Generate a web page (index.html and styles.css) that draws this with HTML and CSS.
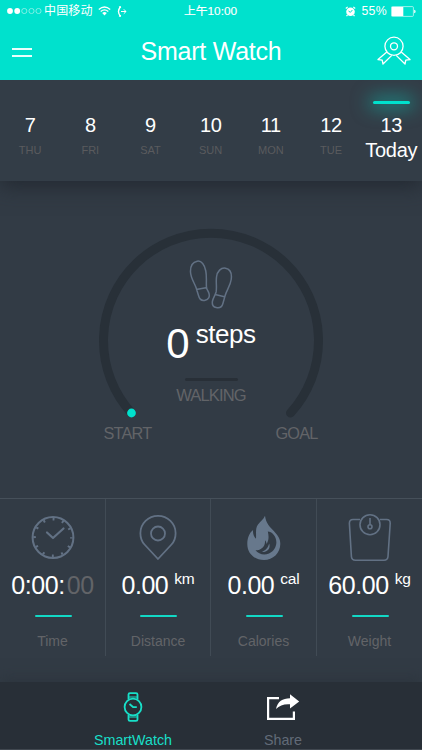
FILE: index.html
```html
<!DOCTYPE html>
<html lang="en">
<head>
<meta charset="utf-8">
<title>Smart Watch</title>
<link rel="stylesheet" href="styles.css">
</head>
<body>
<div class="app">
  <header class="header">
    <div class="status">
      <div class="status-left">
        <svg class="signal" width="36" height="8" viewBox="0 0 36 8"><g fill="#fff"><circle cx="3" cy="4" r="2.9"/><circle cx="10.2" cy="4" r="2.9"/></g><g fill="none" stroke="#fff" stroke-width=".6" opacity=".8"><circle cx="17.3" cy="4" r="2.6"/><circle cx="24.5" cy="4" r="2.6"/><circle cx="31.5" cy="4" r="2.6"/></g></svg>
        <span class="carrier">中国移动</span>
        <svg class="wifi" width="13" height="10" viewBox="0 0 13 10"><path d="M.8 3.4Q6.5-1.5 12.2 3.4M2.7 5.5Q6.5 2.3 10.3 5.5" fill="none" stroke="#fff" stroke-width="1.3"/><path d="M4.2 7Q6.5 5.2 8.8 7L6.5 9.5Z" fill="#fff"/></svg>
        <svg class="forward" width="10" height="11" viewBox="0 0 10 11"><path d="M3.6.8Q-.7 5.5 3.6 10.2" fill="none" stroke="#fff" stroke-width="1.3"/><path d="M2.2 1.5L3.8.6M2.2 9.5L3.8 10.4" stroke="#fff" stroke-width="1.8"/><path d="M4 5.5H9M6.8 3.3L9 5.5L6.8 7.7" fill="none" stroke="#fff"/></svg>
      </div>
      <div class="clock">上午10:00</div>
      <div class="status-right">
        <svg width="11" height="11" viewBox="0 0 11 11"><circle cx="5.5" cy="5.7" r="4.3" fill="#fff"/><path d="M.8 2.5L2.7.9M10.2 2.5L8.3.9M2.5 9L1.5 10.2M8.5 9L9.5 10.2" stroke="#fff" stroke-width="1.2"/><path d="M3.5 5L5.4 6.3L7.4 4" fill="none" stroke="#00e1cd"/></svg>
        <span class="percent">55%</span>
        <svg width="25" height="11" viewBox="0 0 25 11"><rect x=".4" y=".6" width="22" height="9.8" rx="1" fill="none" stroke="#fff" stroke-width=".6"/><path d="M.8 1H12.3V10H.8Z M23.2 3.8Q24.6 4 24.6 5.5T23.2 7.2Z" fill="#fff"/></svg>
      </div>
    </div>
    <div class="nav">
      <div class="menu"><i></i><i></i></div>
      <h1>Smart Watch</h1>
      <svg class="award" width="34" height="29" viewBox="0 0 34 29" fill="none" stroke="#fff" stroke-width="1.3" stroke-linejoin="round"><circle cx="17" cy="10.3" r="9.1"/><circle cx="17" cy="10.3" r="3.5"/><path d="M9.8 16L1 23.5L5.2 24.1L6 28L14.8 19.4M24.2 16L33 23.5L28.8 24.1L28 28L19.2 19.4"/></svg>
    </div>
  </header>

  <section class="days">
    <div class="day"><b>7</b><span>THU</span></div>
    <div class="day"><b>8</b><span>FRI</span></div>
    <div class="day"><b>9</b><span>SAT</span></div>
    <div class="day"><b>10</b><span>SUN</span></div>
    <div class="day"><b>11</b><span>MON</span></div>
    <div class="day"><b>12</b><span>TUE</span></div>
    <div class="day today"><b>13</b><span>Today</span></div>
  </section>

  <main class="main">
    <div class="gauge">
      <svg class="ring" width="226" height="200" viewBox="0 0 226 200"><path d="M33.5 185A107.5 107.5 0 1 1 192.5 185" fill="none" stroke="#283038" stroke-width="9" stroke-linecap="round"/><circle cx="33.5" cy="185" r="4.4" fill="#00e1cd"/></svg>
      <div class="reading">
        <svg class="feet" width="44" height="50" viewBox="0 0 44 50" fill="none" stroke="#627184" stroke-width="1.5" stroke-linejoin="round"><path d="M8.2 1.2C4 2 1.3 6 1.5 12C1.7 18 5.2 22.5 7.2 28L9.5 35.5C10.4 39 13 41 16.2 40.2C19.4 39.4 21 37 20 33.5C19.2 30.5 17.5 30 17.4 26.5C17.2 21 17.8 16 16.8 11C15.7 5 12.5.4 8.2 1.2ZM7.3 29.6L18.2 27.4M36.5 8.2C32 7.5 28.2 11 27.5 17C26.8 23 28 27 27.1 32C26.2 35.5 24.3 37.5 23.5 41C22.9 44 24 46.8 27.2 47.6C30.5 48.4 33 46.8 33.9 43.5L36 36C37.7 30 41.4 25.5 42.2 19.5C43 13.5 41 9 36.5 8.2ZM26.1 34.6L36.5 37"/></svg>
        <div class="count"><span class="zero">0</span><span class="steps">steps</span></div>
        <div class="rule"></div>
        <div class="mode">WALKING</div>
      </div>
    </div>
    <div class="ends"><span>START</span><span>GOAL</span></div>
  </main>

  <section class="stats">
    <div class="stat">
      <svg width="44" height="48" viewBox="0 0 44 48" fill="none" stroke="#627184"><circle cx="22" cy="24.5" r="20.4" stroke-width="2"/><circle cx="22" cy="24.5" r="18.4" stroke-width="2.6" stroke-dasharray="2 7.634" stroke-dashoffset="1"/><path d="M16 19.5L22 25L32.5 15.5" stroke-width="2.2" stroke-linecap="round" stroke-linejoin="round"/></svg>
      <div class="value time">0:00:<em>00</em></div><div class="dash"></div><div class="name">Time</div>
    </div>
    <div class="stat">
      <svg width="44" height="48" viewBox="0 0 44 48" fill="none" stroke="#627184" stroke-width="1.8" stroke-linejoin="round"><path d="M22 46L8.5 31.5C5.3 28 4.4 24 4.4 20.2A17.6 17.3 0 0 1 39.6 20.2C39.6 24 38.7 28 35.5 31.5Z"/><circle cx="22" cy="20.5" r="7"/></svg>
      <div class="value">0.00<sup>km</sup></div><div class="dash"></div><div class="name">Distance</div>
    </div>
    <div class="stat">
      <svg width="44" height="48" viewBox="0 0 44 48"><path fill="#67788c" fill-rule="evenodd" d="M23 2.7C23.8 10 28 14 31.8 18C36 22.5 38.3 25.5 38.3 31C38.3 40 31 47 22 47C12.5 47 5.3 40.5 5.3 31C5.3 25 7.2 20 11.1 17C10.7 20.5 11.7 23.5 14 25.8C14.3 19 13.2 15.5 16 11.5C18.5 8 21.5 6.5 23 2.7ZM25.8 18.5C27.2 24 26.6 28 24.5 31C24.3 29 24 28.3 23 27.2C23.6 33 19.8 37 13.5 37.3C16.5 41.2 22 42.6 27 40.5C35 37 36.6 27 31.2 21.2C29.7 19.5 28 18.8 25.8 18.5ZM27.2 30.5C29 36 24.5 39.5 19.8 38.8C23.8 37.5 25.8 35 27.2 30.5Z"/></svg>
      <div class="value">0.00<sup>cal</sup></div><div class="dash"></div><div class="name">Calories</div>
    </div>
    <div class="stat">
      <svg width="44" height="48" viewBox="0 0 44 48" fill="none" stroke="#627184" stroke-width="1.6"><path d="M12 6.5H5Q1.3 6.5 1.4 10.5L3.4 43.5Q3.7 47.2 7.4 47.2H36Q39.7 47.2 40 43.5L42.2 10.5Q42.4 6.5 38.7 6.5H31.8"/><circle cx="22" cy="11.7" r="10"/><circle cx="22" cy="13.8" r="2"/><path d="M22 5V12"/></svg>
      <div class="value">60.00<sup>kg</sup></div><div class="dash"></div><div class="name">Weight</div>
    </div>
  </section>

  <nav class="tabs">
    <div class="tab active">
      <svg width="20" height="30" viewBox="0 0 20 30" fill="none" stroke="#18dfc8" stroke-width="1.8" stroke-linejoin="round"><circle cx="10" cy="15" r="8.4"/><path d="M5.5 7.5V2.5Q5.5 1.2 7 1.2H13Q14.5 1.2 14.5 2.5V7.5M5.5 22.5V27.5Q5.5 28.8 7 28.8H13Q14.5 28.8 14.5 27.5V22.5M6.5 12L10.3 15.2H13.8"/><path d="M5.5 5H14.5M5.5 25H14.5" stroke-width="1"/></svg>
      <span>SmartWatch</span>
    </div>
    <div class="tab">
      <svg width="34" height="30" viewBox="0 0 34 30"><path d="M13 6.1H2.1V26.9H27.9V19.5" fill="none" stroke="#fff" stroke-width="2.2"/><path d="M10 17C11.5 9.5 16.5 6.2 24 6.2V2.2L33.2 9.5L24 16.5V12.2C18 11.8 13.5 13.2 10 17Z" fill="#fff"/></svg>
      <span>Share</span>
    </div>
  </nav>
</div>
</body>
</html>
```
FILE: styles.css
```css
* { box-sizing: border-box; }
body { margin: 0; font-family: "Liberation Sans", "Noto Sans CJK SC", sans-serif; background: #323b45; }
svg { display: block; flex: none; }
.app { width: 422px; height: 750px; overflow: hidden; display: flex; flex-direction: column; background: #323b45; }

.header { height: 80px; flex: none; background: #00e1cd; color: #fff; }
.status { height: 22px; display: grid; grid-template-columns: 1fr auto 1fr; align-items: center; padding: 0 6px 0 7px; font-size: 12px; line-height: 22px; white-space: nowrap; }
.status-left, .status-right { display: flex; align-items: center; }
.status-right { justify-content: flex-end; }
.carrier { margin-left: 1px; letter-spacing: .15px; }
.wifi { margin-left: 5px; }
.forward { margin-left: 6px; }
.clock { font-size: 11.8px; margin-left: -2px; -webkit-text-stroke: .15px #fff; }
.percent { margin: 0 4px 0 5px; font-size: 12.3px; letter-spacing: .3px; }
.nav { height: 58px; display: grid; grid-template-columns: 60px 1fr 60px; align-items: center; }
.menu { display: flex; flex-direction: column; gap: 5px; padding: 2px 0 0 12px; }
.menu i { width: 20px; height: 2px; background: #e8fffc; }
h1 { margin: 0; text-align: center; font-size: 25px; font-weight: 400; line-height: 30px; letter-spacing: -.25px; }
.award { margin: -2px 0 0 15px; }

.days { height: 101px; flex: none; display: grid; grid-template-columns: repeat(7, 60.2px); background: #333d47; box-shadow: 0 5px 20px rgba(32, 38, 46, .85); clip-path: inset(0 0 -50px 0); }
.day { display: flex; flex-direction: column; align-items: center; padding-top: 33px; }
.day b { font-size: 20px; line-height: 24px; font-weight: 400; color: #fff; letter-spacing: -.4px; }
.day span { font-size: 11px; line-height: 14px; margin-top: 6px; color: #5a5b5e; }
.today { padding-top: 21px; }
.today::before { content: ""; width: 37px; height: 3px; border-radius: 2px; background: #00e1cd; box-shadow: 0 0 18px 4px rgba(0, 225, 205, .5); }
.today b { margin-top: 9px; }
.day.today span { font-size: 20px; line-height: 24px; margin-top: 1px; color: #fff; letter-spacing: -.3px; }

.main { height: 317px; flex: none; padding-top: 47px; display: flex; flex-direction: column; align-items: center; }
.gauge { width: 226px; height: 195px; display: grid; }
.ring, .reading { grid-area: 1 / 1; }
.reading { display: flex; flex-direction: column; align-items: center; padding-top: 32px; }
.count { display: flex; align-items: flex-start; height: 63px; color: #fff; margin-top: 8px; }
.zero { font-size: 42px; line-height: 48px; margin-top: 2px; }
.steps { font-size: 26px; line-height: 30px; margin: 1px 0 0 6px; letter-spacing: -.45px; }
.rule { width: 53px; height: 3px; border-radius: 2px; background: #282f37; margin-top: -3px; }
.mode { font-size: 16.5px; line-height: 20px; margin-top: 4px; color: #626468; letter-spacing: -.85px; }
.ends { width: 213px; display: flex; justify-content: space-between; font-size: 16.3px; line-height: 20px; color: #626468; letter-spacing: -.8px; }
.ends span:first-child { margin-left: -1px; }

.stats { height: 158px; flex: none; display: grid; grid-template-columns: 106px 105px 106px 105px; border-top: 1px solid #46505a; }
.stat { display: flex; flex-direction: column; align-items: center; padding-top: 14px; border-right: 1px solid #414b55; }
.stat:last-child { border-right: 0; }
.stat:first-child svg { margin-left: 1px; }
.value { display: flex; align-items: flex-start; font-size: 25px; line-height: 30px; color: #fff; margin-top: 9px; letter-spacing: -.45px; }
.value em { font-style: normal; color: #626468; margin-left: 2px; }
.value sup { font-size: 15.5px; line-height: 18px; margin-left: 6px; letter-spacing: -.2px; }
.dash { width: 37px; height: 2px; border-radius: 1px; background: #12d8c5; margin: 15px 0 0 1px; }
.name { margin-top: 15px; font-size: 14px; line-height: 18px; color: #626468; }

.tabs { height: 68px; margin-top: 26px; flex: none; display: grid; grid-template-columns: 150px 150px; justify-content: center; background: #282f37; box-shadow: 0 -3px 14px rgba(40, 47, 55, .55); border-bottom: 1px solid #414850; padding-right: 6px; }
.tab { display: flex; flex-direction: column; align-items: center; padding-top: 10px; font-size: 14.3px; color: #626b78; }
.tab span { margin-top: 9px; line-height: 18px; }
.active { color: #18dfc8; }
```
